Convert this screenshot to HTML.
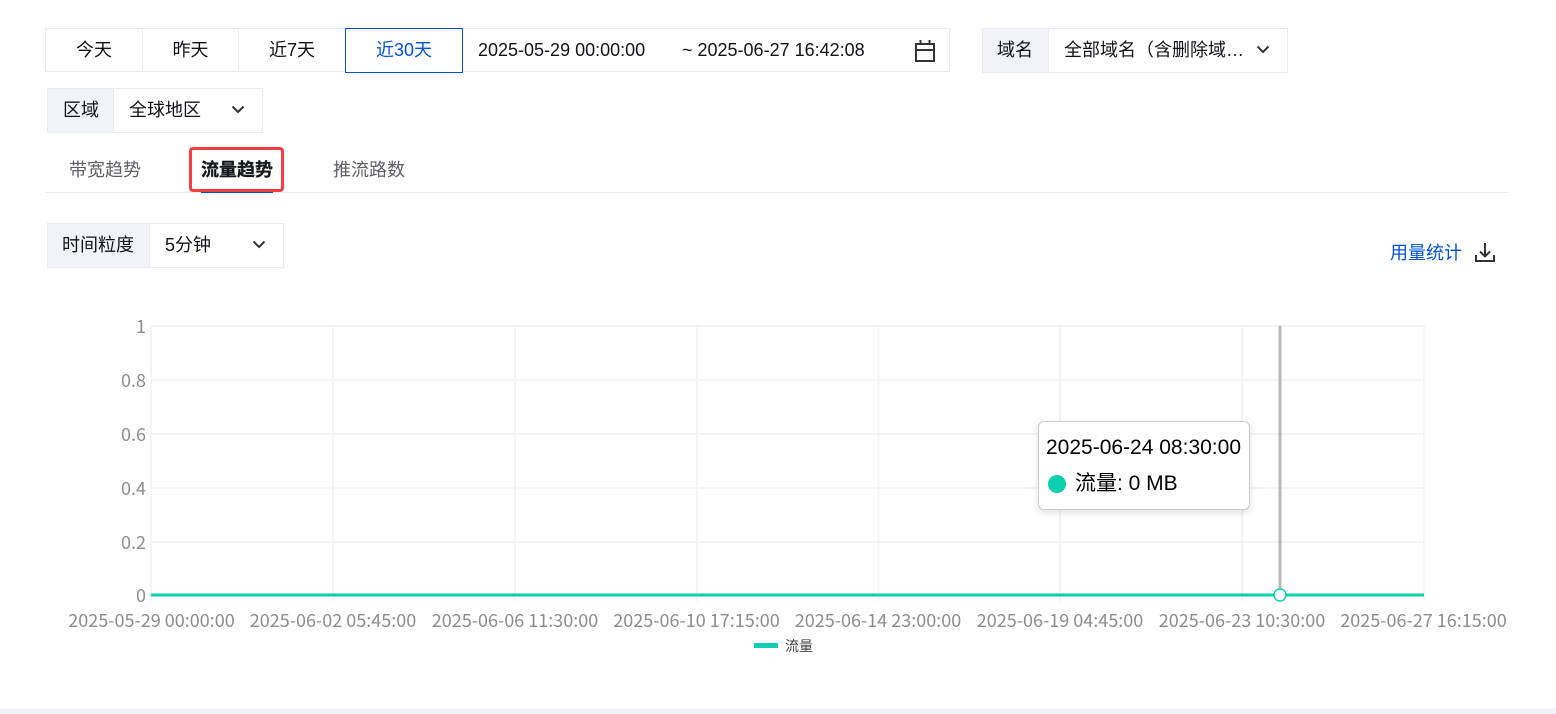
<!DOCTYPE html>
<html lang="zh-CN">
<head>
<meta charset="utf-8">
<title>流量趋势</title>
<style>
html,body{margin:0;padding:0;background:#fff;}
body{position:relative;width:1556px;height:714px;overflow:hidden;font-family:"Liberation Sans","Noto Sans CJK SC",sans-serif;font-size:18px;color:#111318;}
.a{position:absolute;box-sizing:border-box;}
.t{position:absolute;white-space:nowrap;line-height:24px;}
.c{text-align:center;}
.bd{border:1px solid #e7eaef;background:#fff;}
.lab{background:#f2f3f8;border:1px solid #e7eaef;}
svg{position:absolute;overflow:visible;}
</style>
</head>
<body>
<div class="a bd" style="left:45px;top:28px;width:905px;height:44px;"></div>
<div class="a" style="left:142px;top:29px;width:1px;height:42px;background:#e7eaef;"></div>
<div class="a" style="left:238px;top:29px;width:1px;height:42px;background:#e7eaef;"></div>
<div class="a" style="left:345px;top:28px;width:118px;height:45px;border:1px solid #0052d9;background:#fff;"></div>
<div class="t c" style="left:46px;top:38px;width:96px;">今天</div>
<div class="t c" style="left:143px;top:38px;width:95px;">昨天</div>
<div class="t c" style="left:239px;top:38px;width:106px;">近7天</div>
<div class="t c" style="left:345px;top:38px;width:118px;color:#0052d9;">近30天</div>
<div class="t" style="left:478px;top:38px;">2025-05-29 00:00:00</div>
<div class="t" style="left:682px;top:38px;">~ 2025-06-27 16:42:08</div>
<svg style="left:914px;top:40px;" width="22" height="22" viewBox="0 0 22 22" fill="none" stroke="#333" stroke-width="2"><path d="M2 4H20V21H2Z"/><path d="M2 10H20"/><path d="M6.500 0V5M15.500 0V5"/></svg>

<div class="a lab" style="left:982px;top:28px;width:67px;height:45px;"></div>
<div class="a bd" style="left:1048px;top:28px;width:240px;height:45px;"></div>
<div class="t" style="left:997px;top:38px;">域名</div>
<div class="t" style="left:1064px;top:38px;">全部域名（含删除域…</div>
<svg style="left:1256px;top:45px;" width="14" height="10" viewBox="0 0 14 10" fill="none" stroke="#333" stroke-width="2"><path d="M1.500 1.500L7 7L12.500 1.500"/></svg>

<div class="a lab" style="left:47px;top:88px;width:67px;height:45px;"></div>
<div class="a bd" style="left:113px;top:88px;width:150px;height:45px;"></div>
<div class="t" style="left:63px;top:98px;">区域</div>
<div class="t" style="left:129px;top:98px;">全球地区</div>
<svg style="left:231px;top:105px;" width="14" height="10" viewBox="0 0 14 10" fill="none" stroke="#333" stroke-width="2"><path d="M1.500 1.500L7 7L12.500 1.500"/></svg>

<div class="a" style="left:45px;top:192px;width:1463px;height:1px;background:#e7eaef;"></div>
<div class="a" style="left:201px;top:190px;width:72px;height:3px;background:#0052d9;"></div>
<div class="t" style="left:69px;top:158px;color:#5e6066;font-size:18px;">带宽趋势</div>
<div class="t" style="left:201px;top:158px;color:#16181d;font-size:18px;font-weight:700;-webkit-text-stroke:.3px #16181d;">流量趋势</div>
<div class="t" style="left:333px;top:158px;color:#5e6066;font-size:18px;">推流路数</div>
<div class="a" style="left:189px;top:147px;width:95px;height:45px;border:3px solid #f63c43;border-radius:4px;"></div>

<div class="a lab" style="left:47px;top:223px;width:103px;height:45px;"></div>
<div class="a bd" style="left:149px;top:223px;width:135px;height:45px;"></div>
<div class="t" style="left:62px;top:233px;">时间粒度</div>
<div class="t" style="left:165px;top:233px;">5分钟</div>
<svg style="left:252px;top:240px;" width="14" height="10" viewBox="0 0 14 10" fill="none" stroke="#333" stroke-width="2"><path d="M1.500 1.500L7 7L12.500 1.500"/></svg>

<div class="t" style="left:1390px;top:241px;color:#0052d9;">用量统计</div>
<svg style="left:1475px;top:243px;" width="20" height="20" viewBox="0 0 20 20" fill="none" stroke="#333" stroke-width="2"><path d="M10 0V13"/><path d="M5 8.500L10 13.500L15 8.500"/><path d="M1 12V18H19V12"/></svg>

<svg style="left:0;top:0;" width="1556" height="714" viewBox="0 0 1556 714">
  <g stroke="#f3f4f6" stroke-width="2" fill="none">
    <path d="M151 326H1424M151 380H1424M151 434H1424M151 488H1424M151 542H1424"/>
    <path d="M151 326V601M333 326V601M515 326V601M697 326V601M878.500 326V601M1060 326V601M1242 326V601M1424 326V601"/>
  </g>
  <path d="M1280 326V595" stroke="#b9b9b9" stroke-width="3"/>
  <path d="M151 595H1424" stroke="#0ccfb0" stroke-width="3"/>
  <circle cx="1280" cy="595" r="6" fill="#fff" stroke="#0ccfb0" stroke-width="1.500"/>
  <g font-family="'Noto Sans CJK SC',sans-serif" font-size="18" fill="#8c8c8c" text-anchor="end">
    <text x="146" y="333">1</text>
    <text x="146" y="387">0.8</text>
    <text x="146" y="441">0.6</text>
    <text x="146" y="495">0.4</text>
    <text x="146" y="549">0.2</text>
    <text x="146" y="602">0</text>
  </g>
  <g font-family="'Noto Sans CJK SC',sans-serif" font-size="18" fill="#8c8c8c" text-anchor="middle">
    <text x="151.500" y="627">2025-05-29 00:00:00</text>
    <text x="333" y="627">2025-06-02 05:45:00</text>
    <text x="515" y="627">2025-06-06 11:30:00</text>
    <text x="696.500" y="627">2025-06-10 17:15:00</text>
    <text x="878" y="627">2025-06-14 23:00:00</text>
    <text x="1060" y="627">2025-06-19 04:45:00</text>
    <text x="1242" y="627">2025-06-23 10:30:00</text>
    <text x="1423.500" y="627">2025-06-27 16:15:00</text>
  </g>
  <rect x="754" y="643" width="24" height="5" fill="#0ccfb0"/>
  <text x="785" y="651" font-family="'Noto Sans CJK SC',sans-serif" font-size="14" fill="#444">流量</text>
</svg>

<div class="a" style="left:1038px;top:421px;width:212px;height:89px;background:#fff;border:1px solid #ccc;border-radius:6px;box-shadow:0 3px 8px rgba(0,0,0,.12);"></div>
<div class="t" style="left:1046px;top:436px;font-size:21px;color:#000;">2025-06-24 08:30:00</div>
<div class="a" style="left:1048px;top:475px;width:18px;height:18px;border-radius:50%;background:#0ccfb0;"></div>
<div class="t" style="left:1075px;top:472px;font-size:21px;color:#000;">流量: 0 MB</div>

<div class="a" style="left:0;top:709px;width:1556px;height:5px;background:#f1f2f5;"></div>
</body>
</html>
